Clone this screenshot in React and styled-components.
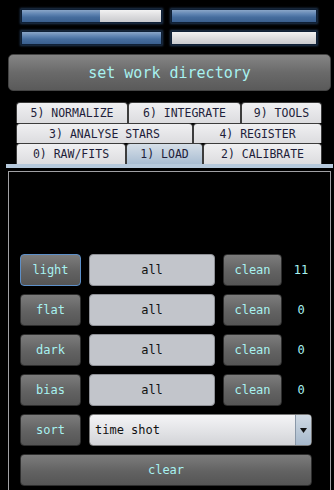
import React from "react";
import styled, { createGlobalStyle, css } from "styled-components";

const Global = createGlobalStyle`
  html, body { margin: 0; padding: 0; background: #000; }
  body { font-family: "DejaVu Sans Mono", "Liberation Mono", monospace; overflow: hidden; }
  #root { width: 334px; height: 490px; }
`;

const Page = styled.div`
  width: 334px;
  height: 490px;
  background: #000;
  display: flex;
  flex-direction: column;
  box-sizing: border-box;
  padding-top: 9px;
`;

const Bars = styled.div`
  display: grid;
  grid-template-columns: 141px 146px;
  column-gap: 9px;
  row-gap: 8px;
  margin-left: 21px;
`;

const Bar = styled.div`
  height: 14px;
  box-sizing: border-box;
  border: 1px solid #0f2036;
  box-shadow: 0 0 2px 1px rgba(60, 100, 150, 0.55);
  background: linear-gradient(#f2f2f2, #dcdcde 50%, #c9cacd);
  display: flex;
`;

const Fill = styled.div`
  height: 100%;
  background: linear-gradient(#8aa6c8, #5f84b2 35%, #466d9e 60%, #3a5f8e);
`;

const BigButton = styled.div`
  margin: 9px 3px 0 8px;
  height: 37px;
  border-radius: 5px;
  background: linear-gradient(#858585, #6a6a6a 50%, #5a5a5a);
  border: 1px solid #444;
  box-sizing: border-box;
  color: #a8f2f0;
  font-size: 15px;
  display: flex;
  align-items: center;
  justify-content: center;
`;

const Tabs = styled.div`
  margin-top: 11px;
  display: flex;
  flex-direction: column;
`;

const TabRow = styled.div`
  display: flex;
  margin: 0 12px 0 16px;
  height: ${(p) => p.$h}px;
`;

const Tab = styled.div`
  box-sizing: border-box;
  width: ${(p) => p.$w}px;
  flex: none;
  border: 1px solid #3c3c3c;
  border-bottom: none;
  border-radius: 4px 4px 0 0;
  font-size: 11.5px;
  color: #1e1e3a;
  display: flex;
  align-items: center;
  justify-content: center;
  background: linear-gradient(#f0f0f2, #dcdcdf);
  ${(p) =>
    p.$sel &&
    css`
      background: linear-gradient(#d6dfe8, #a9bdd2);
    `}
`;

const Strip = styled.div`
  margin: 0 1px 0 6px;
  height: 4px;
  background: #b6c9dc;
`;

const Panel = styled.div`
  margin: 3px 3px 0 8px;
  flex: 1;
  border: 1px solid #a0a0a4;
  border-bottom: none;
  padding: 82px 0 0 11px;
  display: grid;
  grid-template-columns: 61px 126px 59px 22px;
  grid-auto-rows: 32px;
  column-gap: 8px;
  row-gap: 8px;
  align-content: start;
`;

const Btn = styled.div`
  box-sizing: border-box;
  border-radius: 4px;
  background: linear-gradient(#7c7c7c, #626262 55%, #555);
  border: 1px solid ${(p) => (p.$focus ? "#5d8fc8" : "#2e2e2e")};
  color: #a8f2f0;
  font-size: 12px;
  display: flex;
  align-items: center;
  justify-content: center;
  ${(p) => p.$span && css`grid-column: 1 / -1;`}
`;

const Field = styled.div`
  box-sizing: border-box;
  border-radius: 4px;
  background: #c2c5cb;
  border: 1px solid #8e9096;
  color: #111;
  font-size: 12px;
  display: flex;
  align-items: center;
  justify-content: center;
`;

const Count = styled.div`
  color: #a8f2f0;
  font-size: 12px;
  display: flex;
  align-items: center;
  justify-content: center;
`;

const Select = styled.div`
  grid-column: 2 / -1;
  box-sizing: border-box;
  border-radius: 4px;
  border: 1px solid #777;
  background: linear-gradient(#f4f4f6, #e0e1e4 60%, #d2d3d7);
  display: flex;
  overflow: hidden;
`;

const SelectText = styled.div`
  flex: 1;
  color: #111;
  font-size: 12px;
  padding-left: 5px;
  display: flex;
  align-items: center;
`;

const Arrow = styled.div`
  width: 15px;
  border-left: 1px solid #8a98a8;
  background: linear-gradient(#d0dae4, #a6b8cb);
  display: flex;
  align-items: center;
  justify-content: center;
`;

const rows = [
  { name: "light", count: "11", focus: true },
  { name: "flat", count: "0" },
  { name: "dark", count: "0" },
  { name: "bias", count: "0" },
];

export default function App() {
  return (
    <Page>
      <Global />
      <Bars>
        <Bar><Fill style={{ width: "56%" }} /></Bar>
        <Bar><Fill style={{ width: "100%" }} /></Bar>
        <Bar><Fill style={{ width: "100%" }} /></Bar>
        <Bar />
      </Bars>
      <BigButton>set work directory</BigButton>
      <Tabs>
        <TabRow $h={21}>
          <Tab $w={112}>5) NORMALIZE</Tab>
          <Tab $w={113}>6) INTEGRATE</Tab>
          <Tab $w={81}>9) TOOLS</Tab>
        </TabRow>
        <TabRow $h={20}>
          <Tab $w={177}>3) ANALYSE STARS</Tab>
          <Tab $w={129}>4) REGISTER</Tab>
        </TabRow>
        <TabRow $h={21}>
          <Tab $w={110}>0) RAW/FITS</Tab>
          <Tab $w={77} $sel>1) LOAD</Tab>
          <Tab $w={119}>2) CALIBRATE</Tab>
        </TabRow>
        <Strip />
      </Tabs>
      <Panel>
        {rows.map((r) => (
          <React.Fragment key={r.name}>
            <Btn $focus={r.focus}>{r.name}</Btn>
            <Field>all</Field>
            <Btn>clean</Btn>
            <Count>{r.count}</Count>
          </React.Fragment>
        ))}
        <Btn>sort</Btn>
        <Select>
          <SelectText>time shot</SelectText>
          <Arrow>
            <svg width="7" height="5" viewBox="0 0 7 5">
              <path d="M0 0 L7 0 L3.5 5 Z" fill="#111" />
            </svg>
          </Arrow>
        </Select>
        <Btn $span>clear</Btn>
      </Panel>
    </Page>
  );
}
